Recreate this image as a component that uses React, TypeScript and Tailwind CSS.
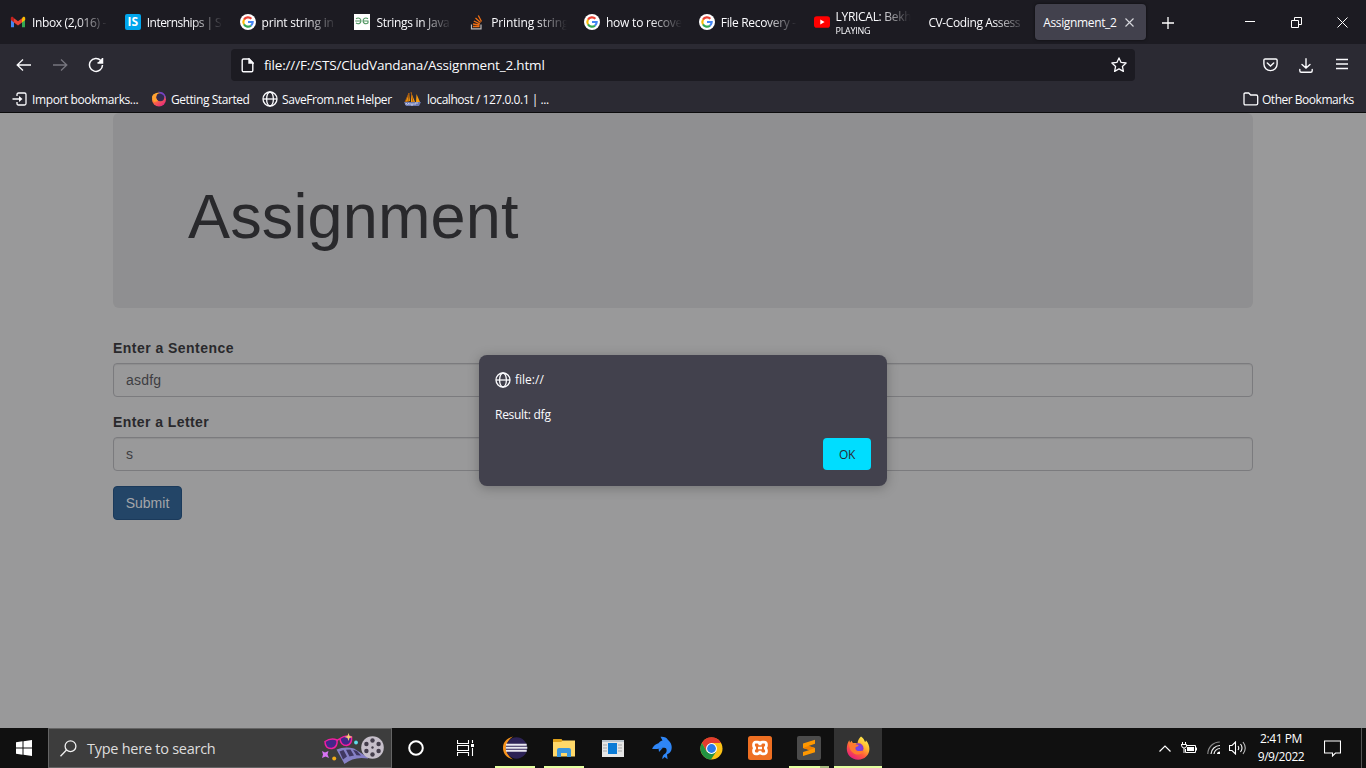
import React from "react";

const Google = () => (
  <svg width="16" height="16" viewBox="0 0 16 16">
    <circle cx="8" cy="8" r="8" fill="#fff" />
    <g fill="none" strokeWidth="2.1">
      <path d="M4 5.6A4.7 4.7 0 0 1 11.4 4.8" stroke="#ea4335" />
      <path d="M4 10.4A4.8 4.8 0 0 1 4 5.6" stroke="#fbbc05" />
      <path d="M11 11.6A4.7 4.7 0 0 1 4 10.4" stroke="#34a853" />
      <path d="M8 8h4.7A4.7 4.7 0 0 1 11 11.6" stroke="#4285f4" />
    </g>
  </svg>
);

const Gmail = () => (
  <svg width="16" height="16" viewBox="0 0 16 16">
    <path d="M1 4.2v9h3V7z" fill="#4285f4" />
    <path d="M15 4.2v9h-3V7z" fill="#34a853" />
    <path d="M12 4.3 13 3c1-.8 2.200 0 2.200 1.100V6L12 8.400z" fill="#fbbc04" />
    <path d="M4 4.300 8 7.300l4-3V8.400l-4 3-4-3z" fill="#ea4335" />
    <path d="M4 4.300 3 3C2 2.200.8 3 .8 4.100V6L4 8.400z" fill="#c5221f" />
  </svg>
);

const Geeks = () => (
  <svg width="16" height="16" viewBox="0 0 16 16">
    <path fill="#fff" d="M0 0h16v16H0z" />
    <g fill="none" stroke="#4f9560" strokeWidth="1.100">
      <path d="M2 4.800c2-1.500 5-.8 5 2.200S3.500 10.400 2 8.900M1.200 7H7" />
      <path d="M14 4.800c-2-1.500-5-.8-5 2.200s3.500 3.400 5 1.900V7H9" />
    </g>
  </svg>
);

const Stack = () => (
  <svg width="16" height="16" viewBox="0 0 16 16" fill="none">
    <path d="M2.500 10.500v4.300h9.500v-4.300" stroke="#bcbbbb" strokeWidth="1.200" />
    <path d="M4 12.500h6.500M4 10l6.500 1M4.800 7l6 2.800M6.500 4l5 4.500M9.300 1.500l3.200 6" stroke="#f06f14" strokeWidth="1.300" />
  </svg>
);

const YouTube = () => (
  <svg width="16" height="16" viewBox="0 0 16 16">
    <rect y="2.300" width="16" height="11.400" rx="2.800" fill="#f00" />
    <path d="m6.300 5.500 4.300 2.500-4.300 2.500z" fill="#fff" />
  </svg>
);

const Globe = () => (
  <svg width="16" height="16" viewBox="0 0 16 16" fill="none" stroke="#fbfbfe" strokeWidth="1.300">
    <circle cx="8" cy="8" r="7" />
    <ellipse cx="8" cy="8" rx="3.400" ry="7" />
    <path d="M1 8h14" />
  </svg>
);

const Firefox = ({ size }: { size: number }) => (
  <svg width={size} height={size} viewBox="0 0 24 24">
    <defs>
      <linearGradient id="fxa" x1="0.85" y1="0.05" x2="0.2" y2="1">
        <stop offset="0" stopColor="#fff44f" />
        <stop offset=".35" stopColor="#ffb02e" />
        <stop offset=".62" stopColor="#ff5a3c" />
        <stop offset="1" stopColor="#e31587" />
      </linearGradient>
      <radialGradient id="fxb">
        <stop offset="0" stopColor="#6f4cf0" />
        <stop offset="1" stopColor="#8a35c9" />
      </radialGradient>
    </defs>
    <path
      d="M15 .5c2.300 1.500 3.400 3.400 3.900 5.300 1-.1 1-.8 1-1.600 2.400 2.500 3.500 5.600 3.500 8.800 0 6-4.800 10.700-11.200 10.700C5.500 23.700.8 19 .8 12.800c0-3.500 1-6.500 2.500-8.500l.7 2.500 1.500-2 1.500 2.400c1.800-.5 3.300-.3 4.600.3C11.500 4.800 13 2.500 15 .5z"
      fill="url(#fxa)"
    />
    <circle cx="12.500" cy="12.300" r="5" fill="url(#fxb)" />
    <path d="M3 8c2.500-1.400 5-1 6.500.3l3.200.8c-.3 1.500-2 1.600-3 2.200-.6 1.200-.2 2.700 1.400 3.500 2.500 1 4.500-1 6.700.3-1.500 3-4.600 4-7.500 3.300C6 17.500 3 13 3 8z" fill="#ff7a2f" />
  </svg>
);

const FirefoxSmall = () => (
  <svg width="16" height="16" viewBox="0 0 16 16">
    <defs>
      <linearGradient id="fs" x1="0" y1="0" x2=".7" y2="1">
        <stop offset="0" stopColor="#ffd43a" />
        <stop offset=".5" stopColor="#ff7139" />
        <stop offset="1" stopColor="#e22880" />
      </linearGradient>
    </defs>
    <circle cx="8" cy="8.500" r="7" fill="url(#fs)" />
    <circle cx="9.300" cy="6.300" r="4" fill="#312a50" />
    <path d="M7 .8c5-.7 8.500 3 8 7.800-1-3-2.600-5.200-5.600-6.200z" fill="#7542c5" />
    <path d="M1 6C2 3 4 2.200 6 2.800L4.500 6.500 7 10l-4 1z" fill="#ffa130" />
  </svg>
);

const tabs: { title: string; icon?: React.ReactNode; cls: string }[] = [
  { title: "Inbox (2,016) -", icon: <Gmail />, cls: "tracking-[-0.35px]" },
  { title: "Internships | S", icon: <span className="flex h-4 w-4 items-center justify-center rounded-[2px] bg-[#00a5ec] text-[12px] font-bold leading-none text-white">IS</span>, cls: "tracking-[-0.55px]" },
  { title: "print string in", icon: <Google />, cls: "tracking-[-0.22px]" },
  { title: "Strings in Java", icon: <Geeks />, cls: "tracking-[-0.3px]" },
  { title: "Printing string", icon: <Stack />, cls: "tracking-[-0.1px]" },
  { title: "how to recove", icon: <Google />, cls: "tracking-[-0.22px]" },
  { title: "File Recovery -", icon: <Google />, cls: "tracking-[-0.32px]" },
  { title: "LYRICAL: Bekh", icon: <YouTube />, cls: "tracking-[-0.3px]" },
  { title: "CV-Coding Assess", cls: "tracking-[-0.38px]" },
];

function TabBar() {
  return (
    <div className="flex h-11 shrink-0 items-center bg-[#1c1b22] pl-[2px] text-[12px]">
      {tabs.map((t, i) => (
        <div key={t.title} className="flex h-9 w-[114.800px] shrink-0 items-center gap-[6px] pl-2">
          {t.icon}
          <div className={"mr-[9px] mt-[2px] min-w-0 flex-1 overflow-hidden whitespace-nowrap [mask-image:linear-gradient(to_left,transparent_0,black_32px)] " + t.cls}>
            {i === 7 ? (
              <div className="leading-[14px]">
                <div className="h-[15px]">{t.title}</div>
                <div className="h-3 text-[9px] leading-3">PLAYING</div>
              </div>
            ) : (
              t.title
            )}
          </div>
        </div>
      ))}
      <div className="flex h-9 w-[111px] items-center justify-between rounded bg-[#42414d] pl-2 pr-[12px] shadow-[0_0_3px_rgba(0,0,0,.6)]">
        <span className="mt-[2px] tracking-[-0.35px]">Assignment_2</span>
        <svg width="9" height="9" viewBox="0 0 9 9" stroke="#d8d8de" strokeWidth="1.100"><path d="m.5.500 8 8m0-8-8 8" /></svg>
      </div>
      <svg className="ml-4 mt-px" width="12" height="12" viewBox="0 0 12 12" stroke="#fff" strokeWidth="1.300"><path d="M6 0v12M0 6h12" /></svg>
      <div className="ml-auto flex items-center pr-[18px]">
        <svg className="mr-[36px]" width="10" height="10" stroke="#fff"><path d="M0 4.500h10" /></svg>
        <svg className="mr-[35px]" width="11" height="11" fill="none" stroke="#fff"><path d="M.5 3.500h7v7h-7zM3.500 3V.500h7v7H8" /></svg>
        <svg width="11" height="11" stroke="#fff"><path d="m.5.500 10 10m0-10-10 10" /></svg>
      </div>
    </div>
  );
}

function NavBar() {
  return (
    <div className="flex h-[42px] shrink-0 items-center">
      <svg className="ml-4" width="16" height="16" viewBox="0 0 16 16" fill="none" stroke="#fbfbfe" strokeWidth="1.300"><path d="M15 8H1.500M7 2.500 1.200 8 7 13.500" /></svg>
      <svg className="ml-5" width="16" height="16" viewBox="0 0 16 16" fill="none" stroke="#77767f" strokeWidth="1.300"><path d="M1 8h13.500M9 2.500l5.800 5.500L9 13.500" /></svg>
      <svg className="ml-5" width="16" height="16" viewBox="0 0 16 16" fill="none" stroke="#fbfbfe" strokeWidth="1.500"><path d="M12.800 3.500A6.500 6.500 0 1 0 14.500 8M14.500 1v5H9.500" /><path d="M14.500 1v5h-5z" fill="#fbfbfe" stroke="none" /></svg>
      <div className="ml-[127px] flex h-8 w-[904px] items-center rounded bg-[#1c1b22] pl-[10px] pr-2">
        <svg width="13" height="15" viewBox="0 0 13 15" fill="none" stroke="#fbfbfe" strokeWidth="1.400"><path d="M8.200 1H2.500A1.300 1.300 0 0 0 1.200 2.300v10.200a1.300 1.300 0 0 0 1.300 1.300h8a1.300 1.300 0 0 0 1.300-1.300V4.700z" /><path d="M8 1v4h4z" fill="#fbfbfe" /></svg>
        <span className="ml-[10px] text-[13.500px] tracking-[-0.180px]">file:///F:/STS/CludVandana/Assignment_2.html</span>
        <svg className="ml-auto" width="16" height="16" viewBox="0 0 16 16" fill="none" stroke="#fbfbfe" strokeWidth="1.300" strokeLinejoin="round"><path d="m8 .9 2.100 4.500 5 .6-3.700 3.400 1 5L8 11.900l-4.400 2.500 1-5L.9 6l5-.6z" /></svg>
      </div>
      <div className="ml-auto flex items-center pr-[18px]">
        <svg className="mr-[21px]" width="15" height="14" viewBox="0 0 15 14" fill="none" stroke="#fbfbfe" strokeWidth="1.400" strokeLinecap="round"><path d="M2.200 1h10.600q1.300 0 1.300 1.300V6a6.600 6.600 0 0 1-13.200 0V2.300Q.9 1 2.200 1z" /><path d="m4.300 5 3.200 3 3.200-3" /></svg>
        <svg className="mr-[23px]" width="14" height="15" viewBox="0 0 14 15" fill="none" stroke="#fbfbfe" strokeWidth="1.400" strokeLinecap="round"><path d="M7 .7v9.300M3 6.500 7 10l4-3.500M.8 11.500v1.200q0 1.500 1.500 1.500h9.400q1.500 0 1.500-1.500v-1.200" /></svg>
        <svg className="mb-[2px]" width="12" height="12" stroke="#fbfbfe" strokeWidth="1.300"><path d="M0 1.500h12M0 6h12M0 10.500h12" /></svg>
      </div>
    </div>
  );
}

function Bookmarks() {
  return (
    <div className="flex h-[26px] shrink-0 items-center whitespace-nowrap pl-3 text-[12px]">
      <svg width="16" height="16" viewBox="0 0 16 16" fill="none" stroke="#fbfbfe" strokeWidth="1.300"><path d="M5 5V3.500Q5 2 6.500 2h6Q14 2 14 3.500v9q0 1.500-1.500 1.500h-6Q5 14 5 12.500V11M.5 8H9" /><path d="m7 5 3.500 3L7 11z" fill="#fbfbfe" stroke="none" /></svg>
      <span className="ml-1 mt-px w-[107px] tracking-[-0.390px]">Import bookmarks...</span>
      <span className="ml-3"><FirefoxSmall /></span>
      <span className="ml-1 mt-px w-[80px] tracking-[-0.42px]">Getting Started</span>
      <span className="ml-[11px]"><Globe /></span>
      <span className="ml-[4px] mt-px w-[111px] tracking-[-0.42px]">SaveFrom.net Helper</span>
      <svg className="ml-[11px]" width="17" height="16" viewBox="0 0 17 16">
        <path d="M1 11 5 2l1 8zM7 11V1l4 10zM12 11l.5-8L16 11z" fill="#f89c0e" />
        <path d="M1 11 5 2 4 11M7 1l2 10" stroke="#a65a10" fill="none" />
        <path d="M0 11h17l-2 4H2z" fill="#6c78af" />
        <path d="M2 14v-2l1.500 1.500L5 12v2m2-2v2h2v-2m2 2v-2h3" fill="none" stroke="#d5d9ef" strokeWidth=".8" />
      </svg>
      <span className="ml-[6px] mt-px tracking-[-0.45px]">localhost / 127.0.0.1 | ...</span>
      <svg className="ml-auto" width="16" height="14" viewBox="0 0 16 14" fill="none" stroke="#fbfbfe" strokeWidth="1.300"><path d="M1 11.500V2.300Q1 1 2.300 1h3.400l2 2h5.500q1.500 0 1.500 1.500v7q0 1.300-1.500 1.300H2.300Q1 12.800 1 11.500z" /></svg>
      <span className="ml-[3px] mr-3 mt-px w-[92px] tracking-[-0.48px]">Other Bookmarks</span>
    </div>
  );
}

function Page() {
  return (
    <main className="relative h-[615px] shrink-0 bg-[#99999a] px-[113px] font-['Liberation_Sans',sans-serif] text-[14px] leading-5 text-[#29292c]">
      <div className="h-[195px] rounded-md bg-[#8f8f91] pl-[75px] pt-[69px]">
        <h1 className="text-[63px] leading-[69px] tracking-[0.150px]">Assignment</h1>
      </div>
      <div className="mt-[30px]">
        <label className="mb-[5px] block font-bold tracking-[0.460px]">Enter a Sentence</label>
        <div className="flex h-[34px] items-center rounded border border-[#7b7b7e] px-3 tracking-[0.2px] text-[#3e3e42] shadow-[inset_0_1px_1px_rgba(0,0,0,.075)]">asdfg</div>
        <label className="mb-[5px] mt-[15px] block font-bold tracking-[0.420px]">Enter a Letter</label>
        <div className="flex h-[34px] items-center rounded border border-[#7b7b7e] px-3 text-[#3e3e42] shadow-[inset_0_1px_1px_rgba(0,0,0,.075)]">s</div>
        <button className="mt-[15px] flex h-[34px] w-[69px] items-center justify-center rounded border border-[#1b3a5b] bg-[#234567] text-[#a3a5a9]">Submit</button>
      </div>
      <div className="absolute left-[479px] top-[242px] flex h-[131px] w-[408px] flex-col rounded-lg bg-[#42414d] px-4 pt-[15px] font-['Open_Sans','Noto_Sans',sans-serif] text-[12px] text-[#fbfbfe] shadow-[0_2px_12px_rgba(0,0,0,.25)]">
        <div className="flex items-center gap-1 leading-5"><Globe /><span>file://</span></div>
        <div className="mt-[15px] tracking-[-0.280px]">Result: dfg</div>
        <button className="mt-[13px] h-8 w-12 self-end rounded bg-[#00ddff] pt-px tracking-[-0.3px] text-[#2b2a33]">OK</button>
      </div>
    </main>
  );
}

const apps: { icon: React.ReactNode; bar?: string }[] = [
  { icon: <svg width="16" height="16" fill="none" stroke="#fff" strokeWidth="2"><circle cx="8" cy="8" r="6.800" /></svg> },
  { icon: <svg className="mr-[2px]" width="17" height="16" fill="none" stroke="#fff" strokeWidth="1.100"><path d="M.5 0v3.500h11V0M.5 5.500h11v5H.5zM.5 16v-3.500h11V16M15.500 0v3M15.500 8v8" /><path d="M14 4h3v3h-3z" fill="#fff" stroke="none" /></svg> },
  {
    icon: (
      <svg width="26" height="24" viewBox="0 0 26 24">
        <path d="M11 .5C4 2.500 1 7 1 12s3 9.500 10 11.500C6 20 4.500 16 4.500 12S6 4 11 .5z" fill="#f7941e" />
        <circle cx="14.500" cy="12" r="10.700" fill="#2c2255" />
        <path d="M4 8.800h20.700M3.800 11.800h21.500M4 14.800h20.700" stroke="#e9e8f0" strokeWidth="1.900" />
      </svg>
    ),
    bar: "mx-1 bg-[#e3ffa0]",
  },
  {
    icon: (
      <svg width="22" height="20" viewBox="0 0 22 20">
        <path d="M0 1.500Q0 1 .5 1h8l1.500 2h12v15H0z" fill="#dfa11b" />
        <path d="M0 4h8l2-1.500h12V18.500H0z" fill="#ffd869" />
        <path d="M4 19v-7q0-2 2-2h10q2 0 2 2v7h-4v-4H8v4z" fill="#3a96dd" />
      </svg>
    ),
    bar: "mx-1 bg-[#e3ffa0]",
  },
  { icon: <svg width="22" height="17" viewBox="0 0 22 17"><path d="M0 0h22v17H0z" fill="#e6e6e6" /><path d="M0 0h22v2H0z" fill="#b9c3cc" /><path d="M6 3h9v11H6z" fill="#0b7bd6" /><path d="M1 5h4M1 8h4M1 11h4M16 5h4M16 8h4M16 11h4" stroke="#a7a7a7" /></svg> },
  { icon: <svg width="22" height="24" viewBox="0 0 22 24"><path d="M1 12.800C2.500 9.500 5 8 7.500 7.200 9 5.500 10.300 5 11.500 4.600L9.500.8C13 .5 15.800 1.500 17 4c3.200 2.500 4.500 6.500 3.300 10.300-.8 2.300-2.800 3.600-4.300 4.200l.6 4.700-3-2.200-2.200 2.200c-.2-2.600.6-4.200 3-5.600 1.500-1.500 1.600-3.600.6-5.300-2.500-.8-4.500-.5-6.500.2-2.500.6-5 .7-7.500.3z" fill="#2f86f6" /><path d="m7.500 12.300.5 3.700 3.700-3.900z" fill="#2f86f6" /></svg> },
  {
    icon: (
      <svg width="23" height="23" viewBox="0 0 24 24">
        <circle cx="12" cy="12" r="11.500" fill="#fbc116" />
        <path d="M2 6.200A11.500 11.500 0 0 1 22 6.200H12L7 15z" fill="#e33b2e" />
        <path d="M2 6.200A11.500 11.500 0 0 0 11.500 23.500L17 15 12 17.200 7 15z" fill="#229342" />
        <circle cx="12" cy="12" r="5.700" fill="#fff" /><circle cx="12" cy="12" r="4.600" fill="#2a7bea" />
      </svg>
    ),
  },
  { icon: <svg width="24" height="24" viewBox="0 0 24 24"><rect width="24" height="24" rx="2.500" fill="#ee6f22" /><path d="M8 6.200h1.500q2.500 0 2.500 3 0-3 2.500-3H16q2.500 0 2.500 2.800T16 12q2.500 0 2.500 3T16 17.800h-1.500q-2.500 0-2.500-3 0 3-2.500 3H8q-2.500 0-2.500-2.800T8 12Q5.500 12 5.500 9T8 6.200zM10 12h4" fill="none" stroke="#fff" strokeWidth="2.700" /></svg> },
  { icon: <svg width="24" height="24" viewBox="0 0 24 24"><rect width="24" height="24" rx="2" fill="#4b4b4b" /><path d="m6 7.500 12-3.700v4L11.500 10l6.500 2v4.200L6 20v-4l6.500-2L6 12z" fill="#ff9800" /><path d="m6 12 6.500 2 5.500-2-6.500-2z" fill="#f07f00" /></svg>, bar: "ml-1 mr-[13px] bg-[#e3ffa0] shadow-[9px_0_0_#a8bb80]" },
  { icon: <Firefox size={24} />, bar: "bg-[#e3ffa0]" },
];

const Festive = () => (
  <svg width="64" height="32" viewBox="0 0 64 32">
    <g stroke="#f01fa0" strokeWidth="1.500" fill="#43268a">
      <path d="M4 8.500q6-4 12-1.500 1 7-5 8.500Q4 16 4 8.500z" />
      <path d="M19 5.500q6-4 11.500-1.500 1 7-5 8.500-6 0-6.500-7z" />
      <path d="M16 8q1.500-2.500 3-1.500" fill="none" />
    </g>
    <path d="m27.500 0 1 3 3 1-3 1-1 3-1-3-3-1 3-1z" fill="#f5cf72" />
    <circle cx="35" cy="9.500" r="1.900" fill="#5fdcea" />
    <circle cx="13.200" cy="25.500" r="2" fill="#f3ad16" />
    <path d="m1 18 3 1.500L7.500 18 6.500 21.500 8 25l-3.500-1.500L1 25l1-3.500z" fill="#d873f4" />
    <path d="M15.500 16.500Q24 13 33 15.500l14 9v1Q33 23 23.500 31z" fill="#8680c6" />
    <path d="m18.500 18.500 4-1.500 3.500 6.500-4 3zM25 16.700l4.500-.2 3.500 6-4.500 1zM32 16.700l4 1.300 4 4.500-4.500-.2z" fill="#403762" />
    <circle cx="51.500" cy="14.500" r="11.300" fill="#c6bfca" />
    <g fill="#433d4b"><circle cx="51.500" cy="7.500" r="2.200" /><circle cx="57.600" cy="11" r="2.200" /><circle cx="57.600" cy="18" r="2.200" /><circle cx="51.500" cy="21.500" r="2.200" /><circle cx="45.400" cy="18" r="2.200" /><circle cx="45.400" cy="11" r="2.200" /><circle cx="51.500" cy="14.500" r="1.200" /></g>
  </svg>
);

function Taskbar() {
  return (
    <div className="flex h-10 shrink-0 bg-[#101010] text-white">
      <div className="flex w-12 items-center justify-center">
        <svg width="16" height="16" fill="#fff"><path d="m0 2.300 6.500-1v6.200H0zM7.500 1.200 16 0v7.500H7.500zM0 8.500h6.500v6.200l-6.500-1zM7.500 8.500H16V16l-8.500-1.200z" /></svg>
      </div>
      <div className="flex w-[344px] items-center border border-[#646464] bg-[#3d3d3d] pl-[11px] pr-[6px]">
        <svg width="17" height="17" fill="none" stroke="#f0f0f0" strokeWidth="1.300"><circle cx="10.500" cy="6.200" r="5.400" /><path d="M6.500 10 .5 16.300" /></svg>
        <span className="ml-[10px] mt-[2px] text-[14.500px] tracking-[-0.260px] text-[#dedede]">Type here to search</span>
        <span className="ml-auto mt-[2px]"><Festive /></span>
      </div>
      <div className="flex">
        {apps.map((a, i) => (
          <div key={i} className={i === 9 ? "flex w-12 flex-col bg-[#333333]" : i === 0 ? "mr-[2px] flex w-12 flex-col" : "mr-px flex w-12 flex-col"}>
            <div className="flex h-[38px] items-center justify-center pt-[2px]">{a.icon}</div>
            {a.bar && <div className={"h-[2px] " + a.bar} />}
          </div>
        ))}
      </div>
      <div className="ml-auto flex items-center">
        <svg width="12" height="7" fill="none" stroke="#fff" strokeWidth="1.200"><path d="m.5 6.500 5.500-5.500 5.500 5.500" /></svg>
        <svg className="ml-[10px]" width="16" height="12" fill="none" stroke="#fff"><path d="M5 3.500h9.500v7h-10V7M15.500 5.500v3M1.500 0v2M4.500 0v2M0 2.500h5.500V4Q5.500 6 3 6 .5 6 .5 3M3 6v5" /><path d="M6 5h7v4H6z" fill="#fff" stroke="none" /></svg>
        <svg className="ml-[10px]" width="14" height="14" fill="none" strokeWidth="1.200"><path d="M.8 13A12 12 0 0 1 12.800 1" stroke="#8a8a8a" /><path d="M4 13A9 9 0 0 1 13 4.500M7 13a6 6 0 0 1 6-5.500" stroke="#eee" /><path d="M10 13q0-2.500 3-2.500V13z" fill="#fff" stroke="none" /></svg>
        <svg className="ml-[8px]" width="18" height="14" fill="none" stroke="#fff" strokeWidth="1.100"><path d="M.5 4.500H3L6.500 1v12L3 9.500H.5zM9 5q1.500 2 0 4M11.500 3q3 4 0 8" /><path d="M14 1q4.500 6 0 12" stroke="#bbb" /></svg>
        <div className="ml-[8px] w-[52px] text-center text-[12px] leading-[18px] tracking-[-0.420px]"><div>2:41 PM</div><div>9/9/2022</div></div>
        <svg className="ml-[17px]" width="17" height="17" fill="none" stroke="#fff" strokeWidth="1.100"><path d="M.5 1h16v12h-5L8.500 16v-3h-8z" /></svg>
        <div className="ml-5 mr-1 h-10 w-px bg-[#555555]" />
      </div>
    </div>
  );
}

export default function App() {
  return (
    <div className="flex h-[768px] w-[1366px] flex-col overflow-hidden bg-[#2b2a33] font-['Open_Sans','Noto_Sans',sans-serif] text-[#fbfbfe]">
      <TabBar />
      <NavBar />
      <Bookmarks />
      <div className="h-px shrink-0 bg-[#0c0c0d]" />
      <Page />
      <Taskbar />
    </div>
  );
}
